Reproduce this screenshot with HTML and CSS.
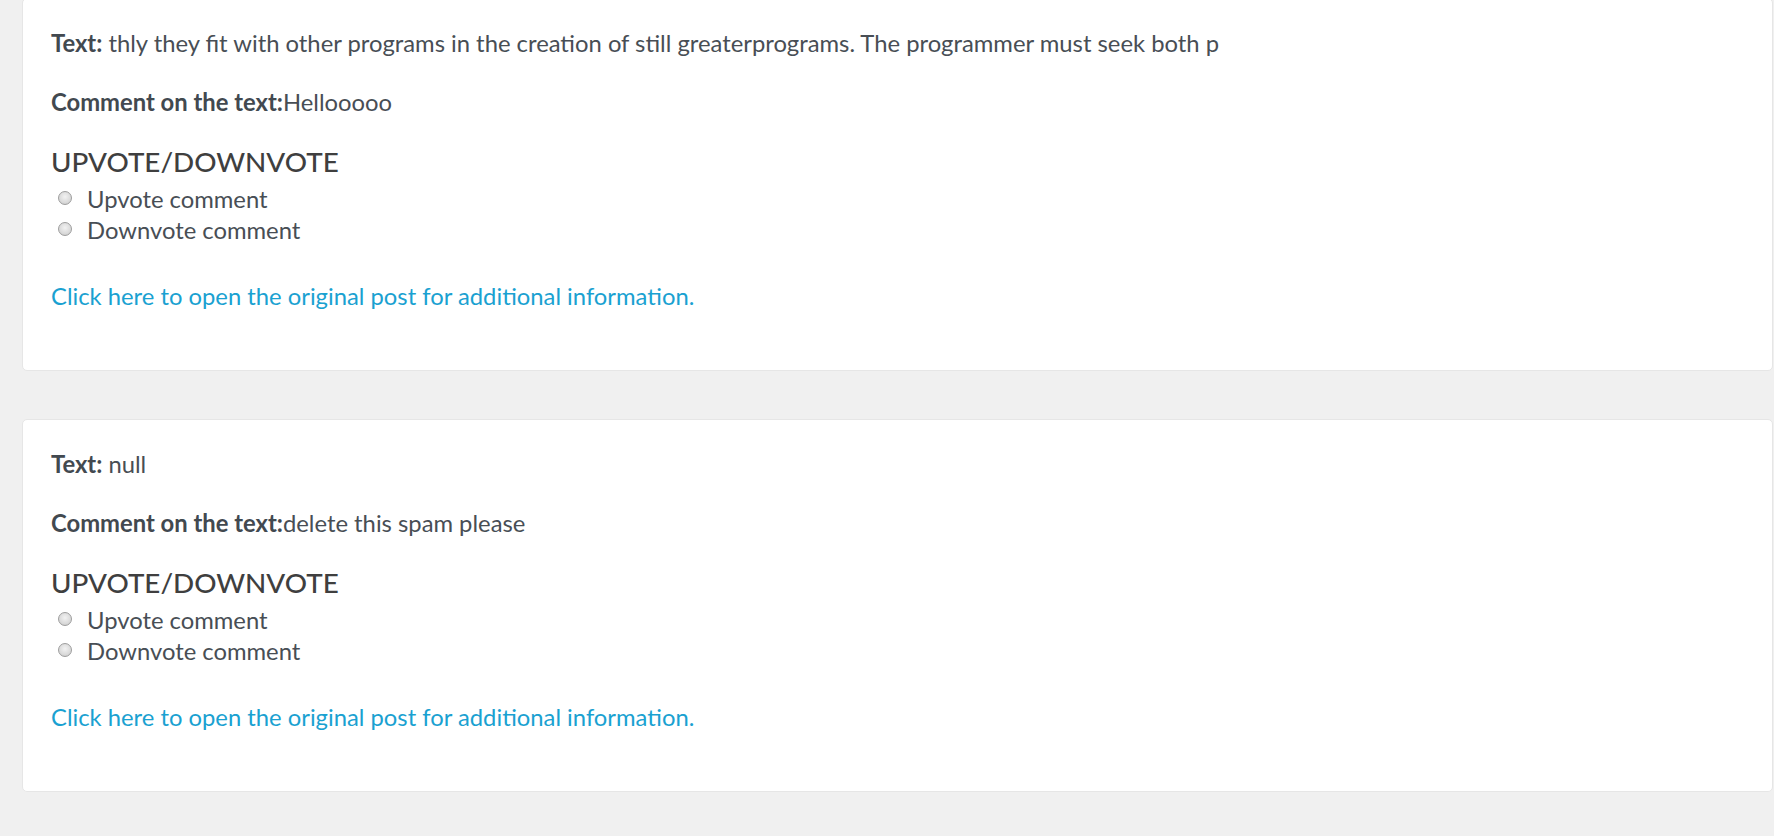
FILE: index.html
```html
<!DOCTYPE html>
<html lang="en">
<head>
<meta charset="utf-8">
<title>Comments</title>
<link rel="stylesheet" href="styles.css">
</head>
<body>
<main class="feed">
  <section class="card">
    <p class="line"><strong>Text:</strong> thly they fit with other programs in the creation of still greaterprograms. The programmer must seek both p</p>
    <p class="line"><strong>Comment on the text:</strong>Hellooooo</p>
    <h4 class="vote-title">UPVOTE/DOWNVOTE</h4>
    <div class="vote-options">
      <label class="vote"><input type="radio" name="v1"><span>Upvote comment</span></label>
      <label class="vote"><input type="radio" name="v1"><span>Downvote comment</span></label>
    </div>
    <a class="post-link" href="#">Click here to open the original post for additional information.</a>
  </section>
  <section class="card">
    <p class="line"><strong>Text:</strong> null</p>
    <p class="line"><strong>Comment on the text:</strong>delete this spam please</p>
    <h4 class="vote-title">UPVOTE/DOWNVOTE</h4>
    <div class="vote-options">
      <label class="vote"><input type="radio" name="v2"><span>Upvote comment</span></label>
      <label class="vote"><input type="radio" name="v2"><span>Downvote comment</span></label>
    </div>
    <a class="post-link" href="#">Click here to open the original post for additional information.</a>
  </section>
</main>
</body>
</html>
```
FILE: styles.css
```css
html, body {
  margin: 0;
  padding: 0;
}
body {
  background: #f0f0f0;
  font-family: Lato, "Open Sans", "Liberation Sans", sans-serif;
  color: #484e55;
  font-size: 23.8px;
  overflow: hidden;
}
.feed {
  display: flex;
  flex-direction: column;
  gap: 48px;
  padding: 0 1px 0 22px;
  margin-top: -2px;
}
.card {
  display: flex;
  flex-direction: column;
  align-items: flex-start;
  background: #fff;
  border: 1px solid #e6e6e6;
  border-radius: 5px;
  padding: 30px 28px 60px;
}
.line {
  margin: 0 0 31px;
  line-height: 28px;
}
.line strong {
  font-weight: 700;
  color: #424950;
}
.vote-title {
  margin: 0;
  font-size: 27.8px;
  line-height: 29px;
  font-weight: 500;
  color: #3f3f3f;
}
.vote-options {
  display: flex;
  flex-direction: column;
  margin-top: 7px;
}
.vote {
  display: flex;
  align-items: center;
  height: 31.5px;
  padding-left: 6px;
}
.vote input {
  appearance: none;
  -webkit-appearance: none;
  flex-shrink: 0;
  box-sizing: border-box;
  width: 14px;
  height: 14px;
  margin: 0 15px 0 1px;
  border-radius: 50%;
  border: 1px solid #9d9d9d;
  background: radial-gradient(circle at 50% 40%, #f2f2f2 0%, #d8d8d8 65%, #c4c4c4 100%);
  position: relative;
  top: -1px;
}
.post-link {
  margin-top: 36px;
  line-height: 28px;
  color: #1aa1d1;
  text-decoration: none;
}
```
